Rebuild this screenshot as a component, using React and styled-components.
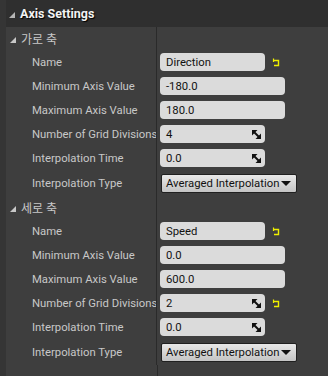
import React from "react"
import styled, {createGlobalStyle} from 'styled-components'

const Global = createGlobalStyle`
    html, body {
        margin: 0;
        padding: 0;
        background: #3e3e3e;
    }
    * {
        box-sizing: border-box;
    }
`
const Panel = styled.div`
    width: 328px;
    height: 376px;
    background: #3e3e3e;
    border-left: 6px solid #353535;
    font-family: Roboto, "Noto Sans CJK KR", sans-serif;
    overflow: hidden;
    display: flex;
    flex-direction: column;
`
const Header = styled.div`
    height: 27px;
    background: #2f2f2f;
    display: flex;
    align-items: center;
    gap: 5px;
    padding-left: 3px;
    color: #f2f2f2;
    font-weight: bold;
    font-size: 12.5px;
    text-shadow: 1px 1px 1px #000;
`
const Triangle = styled.span`
    width: 0;
    height: 0;
    border-left: 6px solid transparent;
    border-bottom: 6px solid ${({light}) => light ? '#c8c8c8' : '#b5b5b5'};
    margin-top: 2px;
`
const Body = styled.div`
    flex: 1;
    display: flex;
    flex-direction: column;
`
const Row = styled.div`
    display: grid;
    grid-template-columns: 151px 1fr;
    height: ${({h}) => h || 24}px;
`
const LabelCell = styled.div`
    border-right: 1px solid #2a2a2a;
    display: flex;
    align-items: center;
    padding-left: ${({indent}) => indent}px;
    gap: 5px;
    color: #c8c8c8;
    font-size: ${({cat}) => cat ? 12 : 11.3}px;
    white-space: nowrap;
    overflow: hidden;
`
const ValueCell = styled.div`
    display: flex;
    align-items: center;
    padding-left: 3px;
    gap: 7px;
`
const Input = styled.div`
    width: ${({w}) => w}px;
    height: 18px;
    background: #dbdbdb;
    border-radius: 4px;
    color: #111;
    font-size: 11.3px;
    display: flex;
    align-items: center;
    justify-content: space-between;
    padding: 0 4px 0 6px;
`
const Combo = styled.div`
    width: 136px;
    height: 19px;
    margin-left: 1px;
    margin-top: 1px;
    background: linear-gradient(#e8e8e8, #c4c4c4);
    border: 1px solid #202020;
    border-radius: 2px;
    color: #111;
    font-size: 11.3px;
    display: flex;
    align-items: center;
    padding: 0 4px 0 4px;
    gap: 2px;
    white-space: nowrap;
`
const Caret = styled.span`
    width: 0;
    height: 0;
    border-left: 5px solid transparent;
    border-right: 5px solid transparent;
    border-top: 5px solid #111;
`
const Spacer = styled.div`
    flex: 1;
    border-left: 151px solid transparent;
    position: relative;
    &::before {
        content: '';
        position: absolute;
        left: 0;
        top: 0;
        bottom: 0;
        width: 1px;
        background: #2a2a2a;
    }
`

const Spin = () => (
    <svg width="9" height="9" viewBox="0 0 9 9">
        <polygon points="0,0 5.5,0 0,5.5" fill="#111" />
        <polygon points="9,9 3.5,9 9,3.5" fill="#111" />
        <line x1="1.5" y1="1.5" x2="7.5" y2="7.5" stroke="#111" strokeWidth="2" />
    </svg>
)

const Reset = () => (
    <svg width="8" height="9" viewBox="0 0 8 9">
        <path d="M1 2.5 H6.5 V7.5 H2" fill="none" stroke="#f0f000" strokeWidth="1.4" />
        <path d="M1.5 0.5 V4" fill="none" stroke="#f0f000" strokeWidth="1.2" />
    </svg>
)

const Field = ({label, children}) => (
    <Row>
        <LabelCell indent={26}>{label}</LabelCell>
        <ValueCell>{children}</ValueCell>
    </Row>
)

const Group = ({title, name, min, max, grid, gridChanged}) => (
    <>
        <Row h={23}>
            <LabelCell indent={4} cat><Triangle light />{title}</LabelCell>
            <ValueCell />
        </Row>
        <Field label="Name">
            <Input w={105}>{name}</Input>
            <Reset />
        </Field>
        <Field label="Minimum Axis Value">
            <Input w={125}>{min}</Input>
        </Field>
        <Field label="Maximum Axis Value">
            <Input w={125}>{max}</Input>
        </Field>
        <Field label="Number of Grid Divisions">
            <Input w={105}>{grid}<Spin /></Input>
            {gridChanged && <Reset />}
        </Field>
        <Field label="Interpolation Time">
            <Input w={105}>0.0<Spin /></Input>
        </Field>
        <Row h={26}>
            <LabelCell indent={26}>Interpolation Type</LabelCell>
            <ValueCell>
                <Combo>Averaged Interpolation<Caret /></Combo>
            </ValueCell>
        </Row>
    </>
)

const App = () => (
    <>
        <Global />
        <Panel>
            <Header><Triangle />Axis Settings</Header>
            <Body>
                <Group title="가로 축" name="Direction" min="-180.0" max="180.0" grid="4" />
                <Group title="세로 축" name="Speed" min="0.0" max="600.0" grid="2" gridChanged />
                <Spacer />
            </Body>
        </Panel>
    </>
)

export default App
